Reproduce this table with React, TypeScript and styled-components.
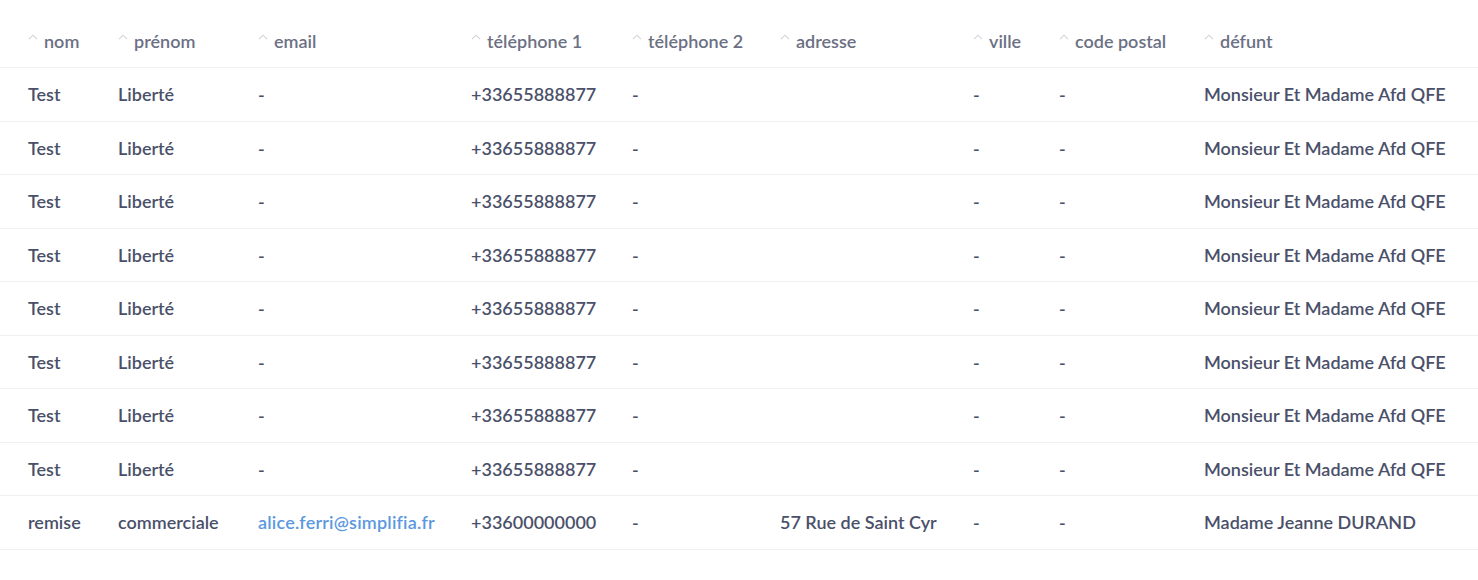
import React from "react";
import styled, { createGlobalStyle } from "styled-components";

const Global = createGlobalStyle`
  html, body { margin: 0; padding: 0; background: #ffffff; }
  body { font-family: Lato, "Noto Sans", sans-serif; -webkit-font-smoothing: antialiased; }
`;

const Table = styled.div`
  width: 1478px;
  display: flex;
  flex-direction: column;
`;

const COLS = "90px 140px 213px 161px 148px 193px 86px 145px 1fr";

const HeadRow = styled.div`
  display: grid;
  grid-template-columns: ${COLS};
  padding: 0 0 0 28px;
  height: 68px;
  align-items: end;
  border-bottom: 1px solid #f0f0f4;
  box-sizing: border-box;
`;

const HeadCell = styled.div`
  display: flex;
  align-items: center;
  gap: 6px;
  padding-bottom: 15px;
  font-size: 18px;
  font-weight: 600;
  color: #6b7084;
  line-height: 22px;
  white-space: nowrap;
`;

const Caret = styled.svg`
  width: 10px;
  height: 6px;
  flex: none;
  margin-top: -9px;
`;

const Row = styled.div`
  display: grid;
  grid-template-columns: ${COLS};
  padding: 0 0 0 28px;
  height: 53.5px;
  align-items: center;
  border-bottom: 1px solid #f0f0f4;
  box-sizing: border-box;
`;

const Cell = styled.div<{ $link?: boolean }>`
  font-size: 18px;
  font-weight: 600;
  line-height: 22px;
  color: ${(p) => (p.$link ? "#5b98df" : "#4a5069")};
  letter-spacing: ${(p) => (p.$link ? "0.2px" : "0")};
  white-space: nowrap;
`;

const headers = [
  "nom",
  "prénom",
  "email",
  "téléphone 1",
  "téléphone 2",
  "adresse",
  "ville",
  "code postal",
  "défunt",
];

type R = string[];
const test: R = [
  "Test",
  "Liberté",
  "-",
  "+33655888877",
  "-",
  "",
  "-",
  "-",
  "Monsieur Et Madame Afd QFE",
];
const rows: R[] = [
  test, test, test, test, test, test, test, test,
  [
    "remise",
    "commerciale",
    "alice.ferri@simplifia.fr",
    "+33600000000",
    "-",
    "57 Rue de Saint Cyr",
    "-",
    "-",
    "Madame Jeanne DURAND",
  ],
];

const CaretIcon = () => (
  <Caret viewBox="0 0 10 6">
    <path d="M1 5.2 L5 1.2 L9 5.2" fill="none" stroke="#d3d4dc" strokeWidth="1.1" />
  </Caret>
);

export default function App() {
  return (
    <>
      <Global />
      <Table>
        <HeadRow>
          {headers.map((h) => (
            <HeadCell key={h}>
              <CaretIcon />
              {h}
            </HeadCell>
          ))}
        </HeadRow>
        {rows.map((r, i) => (
          <Row key={i}>
            {r.map((c, j) => (
              <Cell key={j} $link={j === 2 && c.includes("@")}>
                {c}
              </Cell>
            ))}
          </Row>
        ))}
      </Table>
    </>
  );
}
